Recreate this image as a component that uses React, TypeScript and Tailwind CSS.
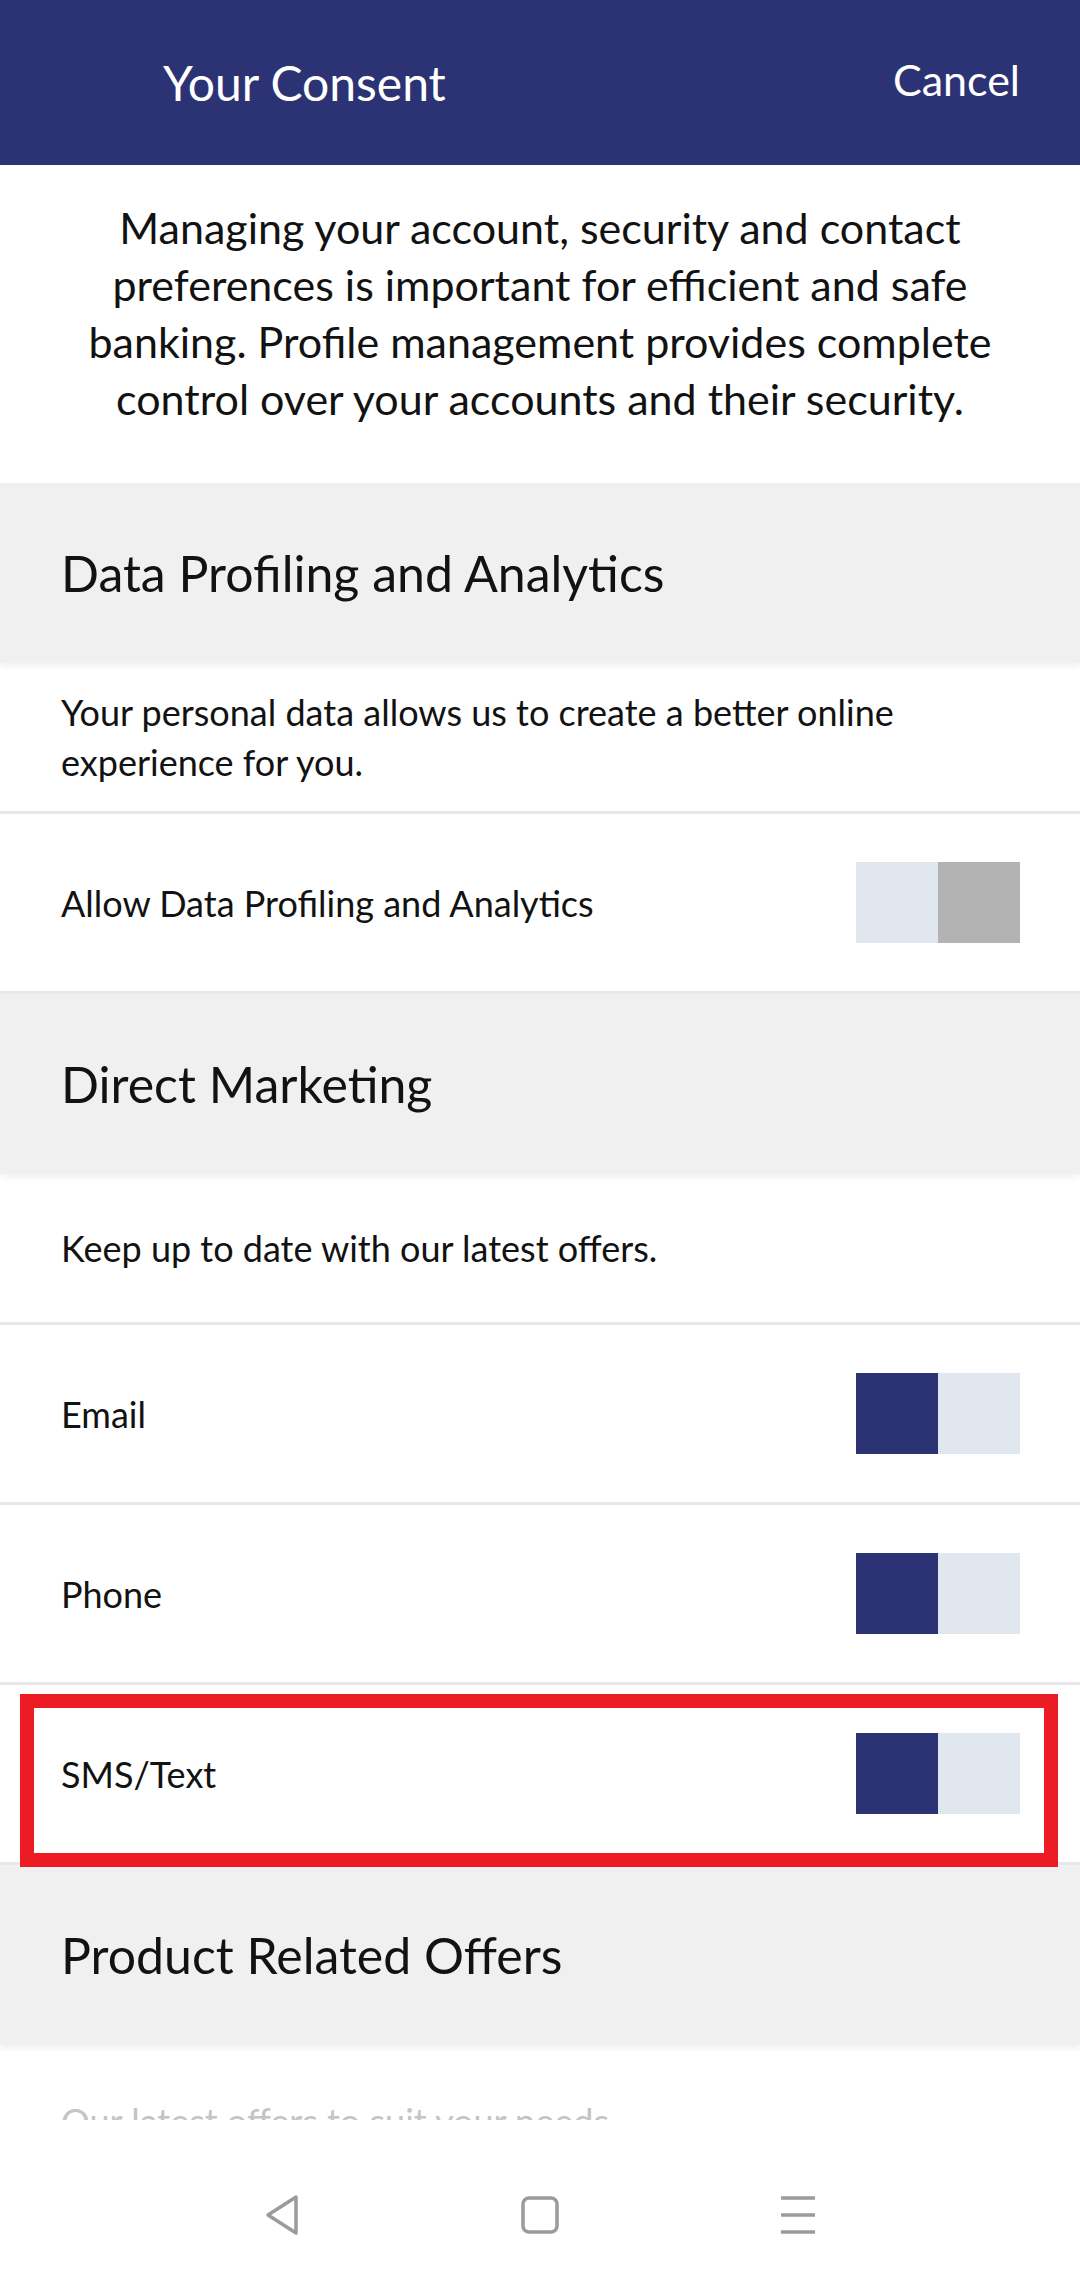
import React from 'react';

const font = { fontFamily: 'Lato, "Noto Sans", sans-serif' };

const Toggle: React.FC<{ on: boolean }> = ({ on }) => (
    <div className="flex w-[164px] h-[81px] shrink-0">
        <div className={`w-[82px] h-full ${on ? 'bg-[#2b3374]' : 'bg-[#e1e7ef]'}`} />
        <div className={`w-[82px] h-full ${on ? 'bg-[#e1e7ef]' : 'bg-[#b3b3b3]'}`} />
    </div>
);

const SectionHeader: React.FC<{ title: string }> = ({ title }) => (
    <div className="relative z-10 h-[180px] bg-[#f0f0f0] flex items-center pl-[61px] shadow-[0_4px_5px_rgba(0,0,0,0.05)]">
        <h2 className="text-[50px] text-[#121212]">{title}</h2>
    </div>
);

const Description: React.FC<{ children: React.ReactNode }> = ({ children }) => (
    <div className="h-[151px] flex items-center px-[61px] border-b-[3px] border-[#e6e8ec]">
        <p className="text-[36px] leading-[50px] text-[#121212]">{children}</p>
    </div>
);

const ToggleRow: React.FC<{ label: string; on: boolean; highlight?: boolean }> = ({ label, on, highlight }) => (
    <div className="relative h-[180px] flex items-center justify-between pl-[61px] pr-[60px] border-b-[3px] border-[#e6e8ec]">
        <span className="text-[36px] text-[#121212]">{label}</span>
        <Toggle on={on} />
        {highlight && (
            <div className="absolute left-[20px] top-[9px] w-[1038px] h-[173px] border-[14px] border-[#ec1c24] z-20 pointer-events-none" />
        )}
    </div>
);

const NavBar: React.FC = () => (
    <div className="h-[162px] shrink-0 bg-white flex items-center justify-center pt-[28px]">
        <div className="w-[258px] flex justify-center">
            <svg width="38" height="44" viewBox="0 0 38 44" fill="none" stroke="#9b9b9b" strokeWidth="3.5" strokeLinejoin="round">
                <path d="M33 4 L5 22 L33 40 Z" />
            </svg>
        </div>
        <div className="w-[258px] flex justify-center">
            <svg width="40" height="40" viewBox="0 0 40 40" fill="none" stroke="#9b9b9b" strokeWidth="3.5">
                <rect x="3" y="3" width="34" height="34" rx="6" />
            </svg>
        </div>
        <div className="w-[258px] flex justify-center">
            <svg width="40" height="40" viewBox="0 0 40 40" fill="none" stroke="#9b9b9b" strokeWidth="3.5">
                <path d="M3 3 H37 M3 20 H37 M3 37 H37" />
            </svg>
        </div>
    </div>
);

export default function App() {
    return (
        <div className="w-[1080px] h-[2282px] flex flex-col bg-white overflow-hidden" style={font}>
            <header className="h-[165px] shrink-0 bg-[#2b3374] flex items-center justify-between pl-[163px] pr-[60px]">
                <h1 className="text-[48px] text-white">Your Consent</h1>
                <button className="text-[43px] text-white -mt-[4px]">Cancel</button>
            </header>

            <div className="flex-1 overflow-hidden">
                <div className="pt-[34px] pb-[56px] px-[20px] text-center">
                    <p className="text-[43px] leading-[57px] text-[#121212]">
                        Managing your account, security and contact<br />
                        preferences is important for efficient and safe<br />
                        banking. Profile management provides complete<br />
                        control over your accounts and their security.
                    </p>
                </div>

                <SectionHeader title="Data Profiling and Analytics" />
                <Description>
                    Your personal data allows us to create a better online<br />
                    experience for you.
                </Description>
                <ToggleRow label="Allow Data Profiling and Analytics" on={false} />

                <SectionHeader title="Direct Marketing" />
                <Description>Keep up to date with our latest offers.</Description>
                <ToggleRow label="Email" on />
                <ToggleRow label="Phone" on />
                <ToggleRow label="SMS/Text" on highlight />

                <SectionHeader title="Product Related Offers" />
                <div className="h-[151px] flex items-center px-[61px]">
                    <p className="text-[36px] leading-[50px] text-[#c4c4c4]">Our latest offers to suit your needs</p>
                </div>
            </div>

            <NavBar />
        </div>
    );
}
